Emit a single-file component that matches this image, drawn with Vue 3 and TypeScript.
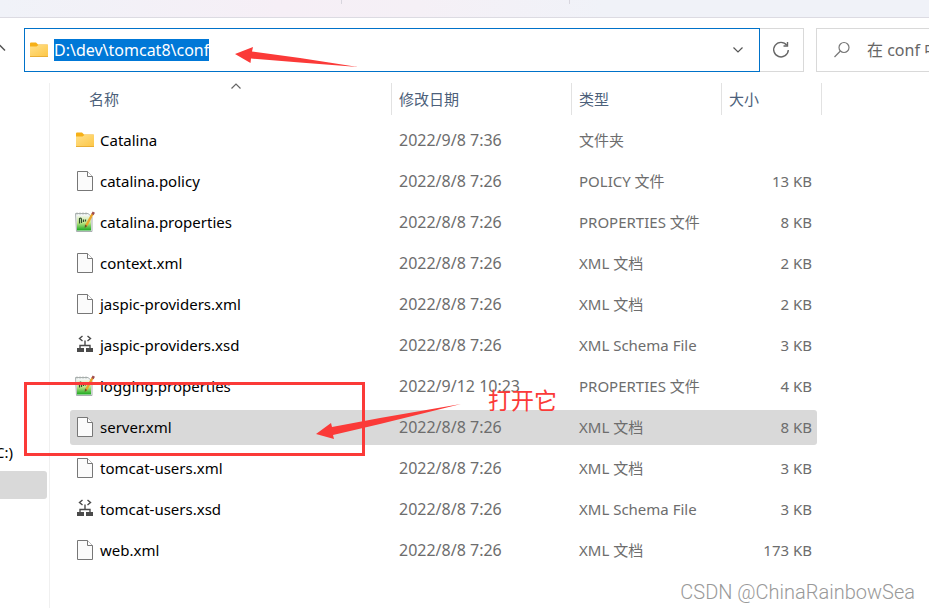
<script setup lang="ts">
import { onMounted, ref } from 'vue'

type Kind = 'folder' | 'page' | 'props' | 'schema'

interface Entry {
  name: string
  date: string
  type: string
  size: string
  kind: Kind
}

const entries: Entry[] = [
  { name: 'Catalina', date: '2022/9/8 7:36', type: '文件夹', size: '', kind: 'folder' },
  { name: 'catalina.policy', date: '2022/8/8 7:26', type: 'POLICY 文件', size: '13 KB', kind: 'page' },
  { name: 'catalina.properties', date: '2022/8/8 7:26', type: 'PROPERTIES 文件', size: '8 KB', kind: 'props' },
  { name: 'context.xml', date: '2022/8/8 7:26', type: 'XML 文档', size: '2 KB', kind: 'page' },
  { name: 'jaspic-providers.xml', date: '2022/8/8 7:26', type: 'XML 文档', size: '2 KB', kind: 'page' },
  { name: 'jaspic-providers.xsd', date: '2022/8/8 7:26', type: 'XML Schema File', size: '3 KB', kind: 'schema' },
  { name: 'logging.properties', date: '2022/9/12 10:23', type: 'PROPERTIES 文件', size: '4 KB', kind: 'props' },
  { name: 'server.xml', date: '2022/8/8 7:26', type: 'XML 文档', size: '8 KB', kind: 'page' },
  { name: 'tomcat-users.xml', date: '2022/8/8 7:26', type: 'XML 文档', size: '3 KB', kind: 'page' },
  { name: 'tomcat-users.xsd', date: '2022/8/8 7:26', type: 'XML Schema File', size: '3 KB', kind: 'schema' },
  { name: 'web.xml', date: '2022/8/8 7:26', type: 'XML 文档', size: '173 KB', kind: 'page' },
]

const selected = ref('server.xml')
const path = ref('D:\\dev\\tomcat8\\conf')
const query = ref('')
const pathInput = ref<HTMLInputElement | null>(null)

onMounted(() => {
  pathInput.value?.focus()
  pathInput.value?.select()
})
</script>

<template>
  <div class="explorer">
    <svg class="defs" width="0" height="0" aria-hidden="true">
      <defs>
        <linearGradient id="g-folder" x1="0" y1="0" x2="1" y2="1">
          <stop offset="0" stop-color="#ffe08a" />
          <stop offset="1" stop-color="#fdc748" />
        </linearGradient>
        <linearGradient id="g-green" x1="0" y1="0" x2="0" y2="1">
          <stop offset="0" stop-color="#eef5e6" />
          <stop offset="0.45" stop-color="#c4e88c" />
          <stop offset="1" stop-color="#17a81d" />
        </linearGradient>
        <symbol id="i-folder" viewBox="0 0 20 22">
          <path d="M1 4.500Q1 3.500 2 3.500H7L9 5.500H18.500Q19 5.500 19 6V9H1Z" fill="#f6b017" />
          <path d="M1 7.500H7.500L9.500 6H19V17H1Z" fill="url(#g-folder)" />
          <path d="M1 17.500H19" stroke="#e9ae35" />
        </symbol>
        <symbol id="i-page" viewBox="0 0 20 22">
          <path d="M2.500 1.500H12.500L17.500 6.500V20.500H2.500Z" fill="#fbfbfb" stroke="#777" />
          <path d="M12.500 1.500V6.500H17.500" fill="#fff" stroke="#777" />
        </symbol>
        <symbol id="i-props" viewBox="0 0 20 22">
          <path d="M0.500 2.500H13L17 6V20.500H1.500Z" fill="#f1f5f3" stroke="#a9b0b0" />
          <path d="M2 5H16V19.500H2Z" fill="url(#g-green)" />
          <path d="M2 1.500V3.500M5 1.500V3.500M8 1.500V3.500M11 1.500V3.500" stroke="#a4aaa6" />
          <path d="M4.500 12.500V7.500Q6.500 6.500 6.500 8.500V12M8.500 8.500V11M10.500 8.500V10.500" fill="none" stroke="#2c4f2a" stroke-width="1.200" />
          <path d="M17.500 3L11 15" stroke="#e9a52b" stroke-width="2.400" />
          <path d="M18.800 1.200L17.500 3.500" stroke="#a04d4d" stroke-width="2.600" />
          <path d="M10 13.500L12.300 15L9.700 17Z" fill="#6b5128" />
        </symbol>
        <symbol id="i-schema" viewBox="0 0 20 22">
          <path d="M7.500 2L4.500 4.500L7.500 7M12.500 2L15.500 4.500L12.500 7" fill="none" stroke="#4a4a4a" stroke-width="1.400" />
          <path d="M10 6.500V11.500M5 14V11.500H15V14" fill="none" stroke="#4a4a4a" stroke-width="1.400" />
          <path d="M2 14H9V18H2ZM11 14H18V18H11Z" fill="#4a4a4a" />
        </symbol>
      </defs>
    </svg>

    <div class="strip"><i class="tick"></i><i class="tick"></i></div>

    <header class="toolbar">
      <button class="up" type="button" aria-label="Up">
        <svg width="12" height="8" viewBox="0 0 12 8"><path d="M1 1L6 1.500L11 6.500" fill="none" stroke="#555" stroke-width="1.500" /></svg>
      </button>
      <div class="address">
        <svg class="icon" aria-hidden="true"><use href="#i-folder" /></svg>
        <input ref="pathInput" v-model="path" class="path" type="text" aria-label="Address" spellcheck="false" />
        <button class="drop" type="button" aria-label="History">
          <svg width="10" height="6" viewBox="0 0 10 6"><path d="M0.500 0.500L5 5L9.500 0.500" fill="none" stroke="#555" stroke-width="1.200" /></svg>
        </button>
      </div>
      <button class="refresh" type="button" aria-label="Refresh">
        <svg width="18" height="18" viewBox="0 0 18 18">
          <path d="M14.800 4.200A7.300 7.300 0 1 0 16.300 9" fill="none" stroke="#666" stroke-width="1.400" />
          <path d="M15.500 1V5H11.500" fill="none" stroke="#666" stroke-width="1.400" />
        </svg>
      </button>
      <label class="search">
        <svg width="18" height="18" viewBox="0 0 18 18" aria-hidden="true">
          <circle cx="11" cy="6.500" r="5" fill="none" stroke="#777" stroke-width="1.200" />
          <path d="M7.400 10L1.500 16" stroke="#777" stroke-width="1.200" />
        </svg>
        <input v-model="query" type="search" placeholder="在 conf 中" aria-label="Search" />
      </label>
    </header>

    <div class="body">
      <nav class="tree">
        <a class="drive" href="#">C:)</a>
        <a class="drive current" href="#" aria-label="Current drive"></a>
      </nav>
      <main class="files">
        <table>
          <colgroup>
            <col />
            <col class="c-date" />
            <col class="c-type" />
            <col class="c-size" />
          </colgroup>
          <thead>
            <tr>
              <th class="h-name" scope="col">
                名称
                <svg class="sort" width="10" height="6" viewBox="0 0 10 6" aria-hidden="true"><path d="M0.500 5.500L5 1L9.500 5.500" fill="none" stroke="#666" stroke-width="1.200" /></svg>
              </th>
              <th scope="col">修改日期</th>
              <th scope="col">类型</th>
              <th class="h-size" scope="col">大小</th>
            </tr>
          </thead>
          <tbody>
            <tr v-for="e in entries" :key="e.name" :class="{ selected: e.name === selected }" @click="selected = e.name">
              <td class="name">
                <span class="label">
                  <svg class="icon" aria-hidden="true"><use :href="'#i-' + e.kind" /></svg>
                  {{ e.name }}
                </span>
              </td>
              <td class="date">{{ e.date }}</td>
              <td>{{ e.type }}</td>
              <td class="size">{{ e.size }}</td>
            </tr>
          </tbody>
        </table>
      </main>
    </div>

    <svg class="marks" width="600" height="480" viewBox="0 0 600 480" aria-hidden="true">
      <path d="M235 54L253 47L252 51.500L300 58L358 67L300 62.500L251 58.500L250.500 63Z" />
      <path d="M316 434L331 423L332 427L380 418L461 404L380 424L333 435L334 439Z" />
      <rect x="25.500" y="383.500" width="338" height="71" />
    </svg>
    <p class="note">打开它</p>
    <p class="watermark">CSDN @ChinaRainbowSea</p>
  </div>
</template>

<style>
body {
  background: #fff;
}
</style>

<style scoped>
.explorer {
  position: relative;
  display: flex;
  flex-direction: column;
  min-height: 100vh;
  overflow: hidden;
  background: #fff;
  color: #000;
  font-family: "Noto Sans", "Noto Sans CJK SC", sans-serif;
  font-size: 15px;
  line-height: 20px;
}
.explorer * {
  box-sizing: border-box;
}
.defs {
  position: absolute;
}
input,
button {
  font: inherit;
  border: 0;
  padding: 0;
  background: none;
  outline: none;
}
.strip {
  display: flex;
  gap: 227px;
  height: 18px;
  padding-left: 341px;
  border-bottom: 1px solid #dcdbe2;
  background: linear-gradient(90deg, #f0f2f8, #f6eff6 30%, #f5f0f6 45%, #f0f2f8 65%);
}
.tick {
  width: 1px;
  height: 4px;
  background: #d8d6de;
}
.toolbar {
  display: flex;
  height: 54px;
  padding-top: 10px;
}
.up {
  display: flex;
  flex: none;
  align-items: center;
  justify-content: flex-end;
  width: 6px;
  padding-bottom: 4px;
  margin-right: 18px;
}
.up svg {
  flex: none;
}
.address {
  display: flex;
  flex: 1;
  align-items: center;
  min-width: 0;
  padding: 0 16px 0 4px;
  border: 1px solid #0072c9;
}
.icon {
  flex: none;
  width: 20px;
  height: 22px;
}
.path {
  flex: 1;
  min-width: 0;
  height: 24px;
  margin-left: 5px;
  color: #000;
  font-size: 16px;
}
.path::selection {
  background: #0078d7;
  color: #fff;
}
.drop,
.refresh {
  display: flex;
  align-items: center;
  justify-content: center;
}
.refresh {
  flex: none;
  width: 44px;
  padding-right: 2px;
  border: 1px solid #d9d9d9;
  border-left: 0;
}
.search {
  display: flex;
  flex: none;
  align-items: center;
  gap: 16px;
  width: 113px;
  margin-left: 12px;
  padding-left: 16px;
  overflow: hidden;
  border: 1px solid #d9d9d9;
  border-right: 0;
}
.search svg {
  flex: none;
}
.search input {
  flex: none;
  width: 120px;
  font-size: 16px;
}
.search input::placeholder {
  color: #666;
  opacity: 1;
}
.body {
  display: flex;
  flex: 1;
  padding-top: 4px;
}
.tree {
  display: flex;
  flex: none;
  flex-direction: column;
  gap: 7px;
  width: 50px;
  margin-top: 7px;
  padding: 357px 2px 0 0;
  border-right: 1px solid #f0f0f0;
}
.drive {
  display: flex;
  align-items: center;
  justify-content: flex-end;
  width: 13px;
  height: 24px;
  color: #000;
  text-decoration: none;
}
.drive.current {
  width: 100%;
  height: 28px;
  border-radius: 0 3px 3px 0;
  background: #d9d9d9;
}
.files {
  flex: 1;
  min-width: 0;
  padding: 0 112px 20px 20px;
}
table {
  width: 100%;
  table-layout: fixed;
  border-collapse: separate;
  border-spacing: 0 6px;
}
.c-date {
  width: 180px;
}
.c-type {
  width: 150px;
}
.c-size {
  width: 96px;
}
th {
  position: relative;
  height: 35px;
  padding: 0 0 2px 8px;
  color: #4c607a;
  font-weight: 400;
  text-align: left;
}
.h-name {
  padding-left: 19px;
}
.sort {
  position: absolute;
  top: 1px;
  left: 50%;
}
th + th::before,
.h-size::after {
  content: "";
  position: absolute;
  top: 1px;
  left: 0;
  width: 1px;
  height: 32px;
  background: #e2e2e2;
}
.h-size::after {
  left: 100px;
}
td {
  height: 35px;
  padding: 0 0 2px 8px;
  color: #6d6d6d;
  white-space: nowrap;
}
td.name {
  padding-left: 5px;
  border-radius: 3px 0 0 3px;
  color: #000;
}
td.date {
  font-size: 16px;
}
.label {
  display: flex;
  align-items: center;
  gap: 5px;
}
td.size {
  padding: 0 5px 2px 0;
  border-radius: 0 3px 3px 0;
  text-align: right;
}
.selected td {
  background: #d9d9d9;
}
.marks {
  position: absolute;
  top: 0;
  left: 0;
  pointer-events: none;
}
.marks path {
  fill: #fb3a38;
}
.marks rect {
  fill: none;
  stroke: #fb3a38;
  stroke-width: 3;
}
.note {
  position: absolute;
  top: 385px;
  left: 488px;
  margin: 0;
  color: #fb3a38;
  font-size: 23px;
  line-height: 30px;
}
.watermark {
  position: absolute;
  right: 14px;
  bottom: 4px;
  margin: 0;
  color: #999;
  font-family: Roboto, "Liberation Sans", sans-serif;
  font-size: 20px;
  font-weight: 300;
  line-height: 24px;
}
</style>
